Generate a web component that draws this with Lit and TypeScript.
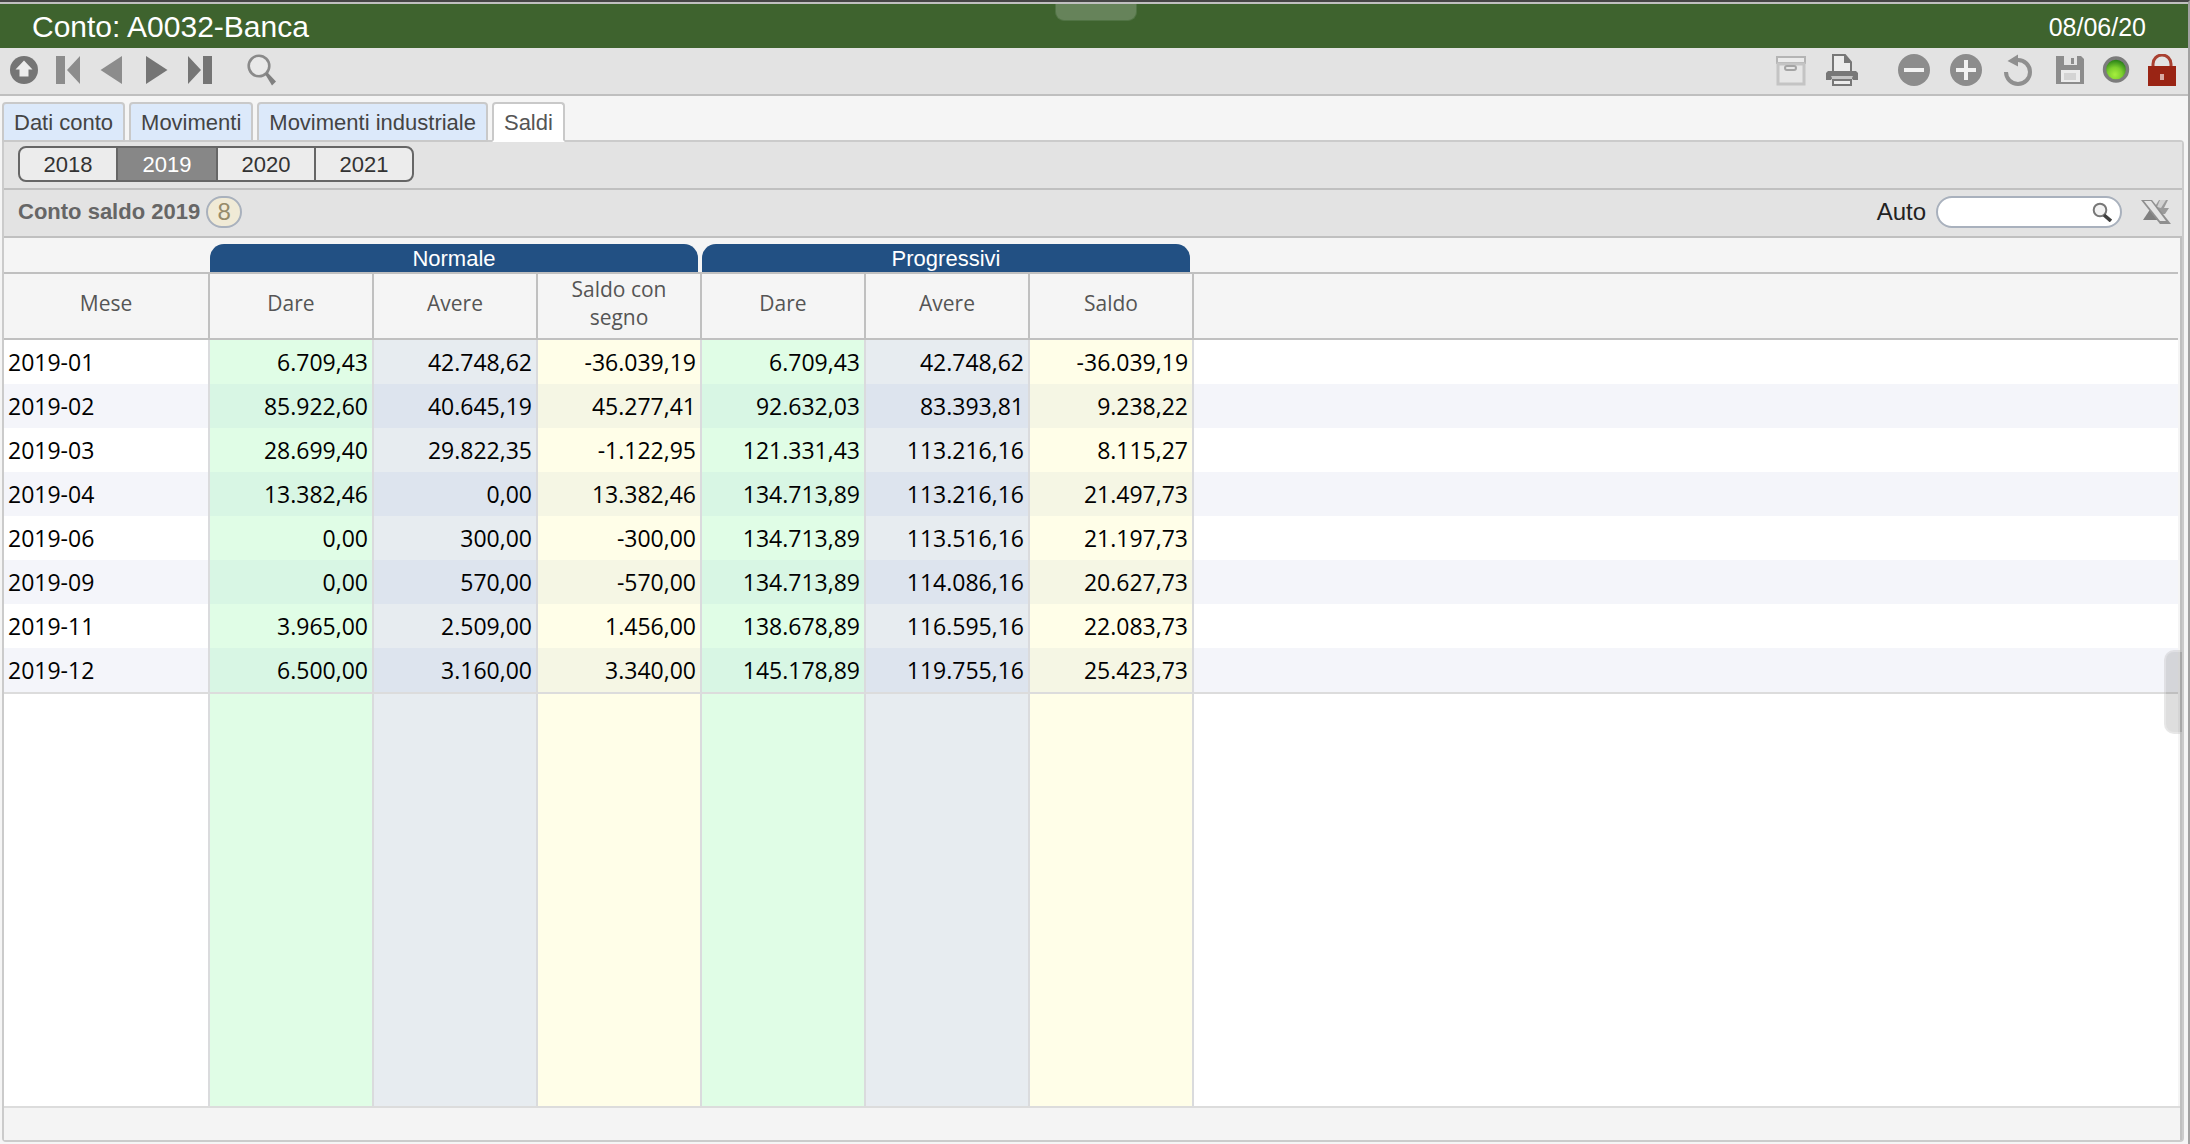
import { LitElement, html, css, svg } from "lit";
import { customElement, state } from "lit/decorators.js";
import { classMap } from "lit/directives/class-map.js";

const icon = (body: unknown) =>
  html`<svg class="icon" viewBox="0 0 32 32" aria-hidden="true">${body}</svg>`;

const ICONS = {
  up: icon(svg`
    <circle cx="16" cy="16" r="14" fill="#757575"/>
    <path d="M16 6.500 24.500 15.500H20.500V22.500H11.500V15.500H7.500Z" fill="#ececec"/>`),
  first: icon(svg`<path d="M4 2H13V30H4ZM28 2V30L15 16Z" fill="#8c8c8c"/>`),
  prev: icon(svg`<path d="M26 2V30L4.500 16Z" fill="#8c8c8c"/>`),
  next: icon(svg`<path d="M6 2V30L27.500 16Z" fill="#757575"/>`),
  last: icon(svg`<path d="M4 2V30L17 16ZM19 2H28V30H19Z" fill="#757575"/>`),
  search: icon(svg`
    <circle cx="13" cy="12" r="10.300" fill="#e9e9e9" stroke="#8a8a8a" stroke-width="2.600"/>
    <path d="M19 20 21.500 18.500 30 27.500 26 31.500Z" fill="#808080"/>`),
  archive: icon(svg`
    <rect x="3" y="3" width="28" height="6" fill="#ebebeb" stroke="#b4b4b4" stroke-width="2"/>
    <rect x="4" y="10" width="26" height="20" fill="#e6e6e6" stroke="#c4c4c4" stroke-width="3"/>
    <rect x="11" y="12" width="11" height="4" rx="2" fill="none" stroke="#a4a4a4" stroke-width="2"/>`),
  print: icon(svg`
    <path d="M7 17V1H19L25 8V17" fill="#ececec" stroke="#777" stroke-width="2"/>
    <path d="M18 1V9H26Z" fill="#777"/>
    <path d="M2 17H30L32 19V26H27L25 23H7L5 26H0V19Z" fill="#777"/>
    <path d="M5 22H27L25.500 25H6.500Z" fill="#c4c4c4"/>
    <path d="M7 26H25V31H7Z" fill="#ececec" stroke="#777" stroke-width="2"/>`),
  remove: icon(svg`
    <circle cx="16" cy="16" r="16" fill="#8c8c8c"/>
    <rect x="6" y="14" width="20" height="4" fill="#f2f2f2"/>`),
  add: icon(svg`
    <circle cx="16" cy="16" r="16" fill="#8c8c8c"/>
    <path d="M14 6H18V14H26V18H18V26H14V18H6V14H14Z" fill="#f2f2f2"/>`),
  revert: icon(svg`
    <path d="M4 18A12 12 0 1 0 16 6H12" fill="none" stroke="#8f8f8f" stroke-width="4"/>
    <path d="M16 .500V12.500L5.500 7Z" fill="#8f8f8f"/>`),
  save: icon(svg`
    <path d="M2 2H27L30 5V30H2Z" fill="#8c8c8c"/>
    <rect x="10" y="2" width="13" height="9" fill="#e2e2e2"/>
    <rect x="17" y="4" width="3" height="6" fill="#8c8c8c"/>
    <rect x="7" y="16" width="19" height="12" fill="#ececec"/>
    <rect x="10" y="19" width="12" height="7" fill="#d4d4d4"/>`),
  led: icon(svg`
    <defs><radialGradient id="led" cx="45%" cy="72%" r="62%">
      <stop offset="0" stop-color="#a6ee3e"/><stop offset=".5" stop-color="#7ccf2e"/>
      <stop offset="1" stop-color="#2c8418"/></radialGradient></defs>
    <circle cx="16" cy="15.500" r="11.500" fill="url(#led)" stroke="#7c7c7c" stroke-width="3.400"/>`),
  lock: icon(svg`
    <path d="M7 13V10A9 9 0 0 1 25 10V13" fill="none" stroke="#a94031" stroke-width="3"/>
    <rect x="2" y="12" width="28" height="20" fill="#9a2414"/>
    <rect x="14" y="20" width="4" height="6" fill="#d9aaa3"/>`),
  excel: icon(svg`
    <path d="M19 4H28L24 12H29L25 18H19L14 12Z" fill="#9b9b9b"/>
    <path d="M20 4H26L21 12 17 11Z" fill="#d2d2d2"/>
    <path d="M11 12 20 24H3Z" fill="#808080"/>
    <path d="M1 4H12L31 28H20Z" fill="#8f8f8f"/>
    <path d="M4 5H11L26 25H20Z" fill="#e4e4e4"/>`),
};

const YEARS = ["2018", "2019", "2020", "2021"];
const TABS = ["Dati conto", "Movimenti", "Movimenti industriale", "Saldi"];

const ROWS = [
  ["2019-01", "6.709,43", "42.748,62", "-36.039,19", "6.709,43", "42.748,62", "-36.039,19"],
  ["2019-02", "85.922,60", "40.645,19", "45.277,41", "92.632,03", "83.393,81", "9.238,22"],
  ["2019-03", "28.699,40", "29.822,35", "-1.122,95", "121.331,43", "113.216,16", "8.115,27"],
  ["2019-04", "13.382,46", "0,00", "13.382,46", "134.713,89", "113.216,16", "21.497,73"],
  ["2019-06", "0,00", "300,00", "-300,00", "134.713,89", "113.516,16", "21.197,73"],
  ["2019-09", "0,00", "570,00", "-570,00", "134.713,89", "114.086,16", "20.627,73"],
  ["2019-11", "3.965,00", "2.509,00", "1.456,00", "138.678,89", "116.595,16", "22.083,73"],
  ["2019-12", "6.500,00", "3.160,00", "3.340,00", "145.178,89", "119.755,16", "25.423,73"],
];

const KINDS = ["month", "dare", "avere", "saldo", "dare", "avere", "saldo"];
const HEADS = ["Mese", "Dare", "Avere", "Saldo con segno", "Dare", "Avere", "Saldo"];

@customElement("saldi-table")
class SaldiTable extends LitElement {
  static styles = css`
    :host { display: grid; background: #fff; }
    table { width: 100%; height: 100%; table-layout: fixed; border-collapse: separate; border-spacing: 0;
      font-family: "Open Sans", "Noto Sans", sans-serif; }
    th, td { box-sizing: border-box; padding: 0; }
    .col-month { width: 206px; }
    .col-num { width: 164px; }
    thead th, thead td { background: #f5f5f5; border-bottom: 2px solid #c0c0c0; font-weight: 400; }
    .groups { height: 36px; }
    .groups th, .groups td { vertical-align: bottom; }
    .group { display: block; margin-right: 4px; padding-top: 2px; border-radius: 14px 14px 0 0; background: #225083;
      color: #fff; font: 22px/26px "Liberation Sans", Arial, sans-serif; }
    .heads { height: 66px; }
    .heads th { padding: 0 24px 6px; border-right: 2px solid #c0c0c0; color: #555; font-size: 21px; line-height: 28px; }
    .row { height: 44px; }
    .row th, .row td { font-size: 23px; line-height: 44px; font-weight: 400; text-align: right;
      padding: 0 4px; color: #000; white-space: nowrap; }
    .row .month { text-align: left; }
    .row:nth-child(even) .month, .row:nth-child(even) .rest { background: #f4f5fa; }
    .row.end { height: 46px; }
    .row.end th, .row.end td { border-bottom: 2px solid #dcdcdc; }
    .month, .dare, .avere, .saldo { border-right: 2px solid #dadbdd; }
    .dare { background: #e0fde6; }
    .avere { background: #e7ecf0; }
    .saldo { background: #fffee8; }
    .row:nth-child(even) .dare { background: #d8f6e4; }
    .row:nth-child(even) .avere { background: #dde4ee; }
    .row:nth-child(even) .saldo { background: #f5f6e4; }
    .filler { height: 100%; }
  `;
  render() {
    return html`<table>
      <colgroup>
        <col class="col-month" />${HEADS.slice(1).map(() => html`<col class="col-num" />`)}<col />
      </colgroup>
      <thead>
        <tr class="groups">
          <td></td>
          <th colspan="3" scope="colgroup"><span class="group">Normale</span></th>
          <th colspan="3" scope="colgroup"><span class="group">Progressivi</span></th>
          <td></td>
        </tr>
        <tr class="heads">${HEADS.map((h) => html`<th scope="col">${h}</th>`)}<td></td></tr>
      </thead>
      <tbody>
        ${ROWS.map((r, n) => html`<tr class=${classMap({ row: true, end: n === ROWS.length - 1 })}>
          ${r.map((v, i) => i === 0
            ? html`<th scope="row" class="month">${v}</th>`
            : html`<td class=${KINDS[i]}>${v}</td>`)}<td class="rest"></td>
        </tr>`)}
        <tr class="filler">${KINDS.map((k) => html`<td class=${k}></td>`)}<td></td></tr>
      </tbody>
    </table>`;
  }
}

@customElement("app-root")
class AppRoot extends LitElement {
  @state() private year = "2019";

  static styles = css`
    :host { display: block; font-family: "Liberation Sans", Arial, sans-serif; color: #333; }
    * { box-sizing: border-box; }
    .window { position: relative; display: flex; flex-direction: column; min-height: 100vh;
      background: #f5f5f5; border-top: 2px solid #454545; border-right: 2px solid #a2a2a2; }
    .title { display: flex; align-items: center; justify-content: space-between; height: 46px;
      padding: 2px 42px 0 32px; border-top: 2px solid #c0c0c0; background: #3e632e; color: #fff; }
    h1 { margin: 0; font-size: 30px; font-weight: 400; line-height: 34px; }
    .date { font-size: 25px; line-height: 30px; }
    button { border: 0; margin: 0; padding: 0; background: none; font: inherit; color: inherit; cursor: pointer; }
    .icon { display: block; width: 32px; height: 32px; }
    .toolbar { display: flex; align-items: center; justify-content: space-between; height: 48px;
      padding: 0 10px 2px 8px; background: #e3e3e3; border-bottom: 2px solid #bfbfbf; }
    .tools { display: flex; gap: 12px; }
    .find { margin-left: 18px; }
    .actions { display: flex; gap: 40px; }
    .set { display: flex; gap: 20px; }
    .status { display: flex; gap: 14px; margin-left: -26px; }
    .tabs { display: flex; gap: 4px; padding: 6px 2px 0; }
    .tab { height: 40px; margin-bottom: -2px; padding: 2px 10px 0; border: 2px solid #c9c9c9;
      border-radius: 4px 4px 0 0; background: #dce9fa; color: #444; font-size: 22px; line-height: 34px;
      text-decoration: none; position: relative; }
    .tab.active { background: #fff; border-bottom-color: #fff; color: #555; }
    .panel { flex: 1; display: flex; flex-direction: column; margin: 0 4px 2px 2px;
      border: 2px solid #cbcbcb; border-radius: 0 4px 4px 4px; }
    .years { display: flex; padding: 4px 14px 6px; background: #e3e3e3; border-bottom: 2px solid #c0c0c0; }
    .segments { display: flex; border: 2px solid #666; border-radius: 8px; overflow: hidden; background: #ececec; }
    .segment { width: 98px; padding-top: 2px; font-size: 22px; line-height: 30px; color: #333; }
    .segment:first-child { width: 96px; }
    .segment + .segment { border-left: 2px solid #666; }
    .segment.active { width: 100px; background: #878787; color: #fff; }
    .caption { display: flex; align-items: center; height: 48px; padding: 0 10px 2px 14px;
      background: #e3e3e3; border-bottom: 2px solid #c0c0c0; }
    h2 { margin: 0; font-size: 22px; line-height: 30px; color: #666; }
    .count { width: 36px; height: 32px; margin-left: 6px; border: 2px solid #a9b1bd; border-radius: 16px;
      background: #f0ead6; color: #968b6a; font-size: 24px; line-height: 28px; text-align: center; }
    .auto { margin-left: auto; font-size: 24px; line-height: 30px; color: #222; }
    .box { display: flex; align-items: center; width: 186px; height: 32px; margin: 0 18px 0 10px;
      padding: 0 8px 0 12px; border: 2px solid #a9b1bd; border-radius: 16px; background: #fff; }
    .box input { flex: 1; min-width: 0; border: 0; padding: 0; outline: 0; background: none; font: inherit; font-size: 20px; }
    .lens { display: block; width: 20px; height: 20px; }
    .grid { flex: 1; display: flex; flex-direction: column; border-right: 2px solid #c0c0c0; }
    saldi-table { flex: 1; margin-right: 2px; }
    .footer { height: 34px; background: #f4f4f4; border-top: 2px solid #dcdcdc; }
    .pull-top { position: absolute; top: 2px; left: calc(50% - 39px); width: 82px; height: 17px;
      border-radius: 0 0 9px 9px; background: #66835a; border: 1px solid #507344; border-top: 0; }
    .pull-side { position: absolute; right: 6px; top: 648px; width: 18px; height: 84px;
      border-radius: 10px 0 0 10px; background: rgba(0, 0, 0, 0.13); border: 2px solid rgba(255, 255, 255, 0.25); border-right: 0; }
  `;

  private tool(label: string, body: unknown, cls = "") {
    return html`<button class=${cls} type="button" aria-label=${label}>${body}</button>`;
  }

  render() {
    return html`<div class="window">
      <header class="title"><h1>Conto: A0032-Banca</h1><span class="date">08/06/20</span></header>
      <div class="toolbar">
        <div class="tools">
          ${this.tool("Su", ICONS.up)}${this.tool("Primo", ICONS.first)}${this.tool("Precedente", ICONS.prev)}
          ${this.tool("Successivo", ICONS.next)}${this.tool("Ultimo", ICONS.last)}${this.tool("Cerca", ICONS.search, "find")}
        </div>
        <div class="actions">
          <div class="set">${this.tool("Archivia", ICONS.archive)}${this.tool("Stampa", ICONS.print)}</div>
          <div class="set">${this.tool("Elimina", ICONS.remove)}${this.tool("Aggiungi", ICONS.add)}
            ${this.tool("Ripristina", ICONS.revert)}${this.tool("Salva", ICONS.save)}</div>
          <div class="status">${ICONS.led}${this.tool("Blocca", ICONS.lock)}</div>
        </div>
      </div>
      <nav class="tabs">
        ${TABS.map((t) => html`<a href="#" class=${classMap({ tab: true, active: t === "Saldi" })}>${t}</a>`)}
      </nav>
      <main class="panel">
        <div class="years"><div class="segments">
          ${YEARS.map((y) => html`<button type="button" class=${classMap({ segment: true, active: y === this.year })}
            @click=${() => (this.year = y)}>${y}</button>`)}
        </div></div>
        <div class="caption">
          <h2>Conto saldo ${this.year}</h2><span class="count">8</span>
          <label class="auto" for="auto">Auto</label>
          <div class="box">
            <input id="auto" type="text" />
            <svg class="lens" viewBox="0 0 20 20" aria-hidden="true">
              <circle cx="8" cy="8" r="6.300" fill="#f2f2f2" stroke="#777" stroke-width="2"/>
              <path d="M12 13 19 19" stroke="#3f3f3f" stroke-width="3.600"/>
            </svg>
          </div>
          ${this.tool("Esporta Excel", ICONS.excel)}
        </div>
        <div class="grid"><saldi-table></saldi-table><div class="footer"></div></div>
      </main>
      <div class="pull-top"></div>
      <div class="pull-side"></div>
    </div>`;
  }
}
